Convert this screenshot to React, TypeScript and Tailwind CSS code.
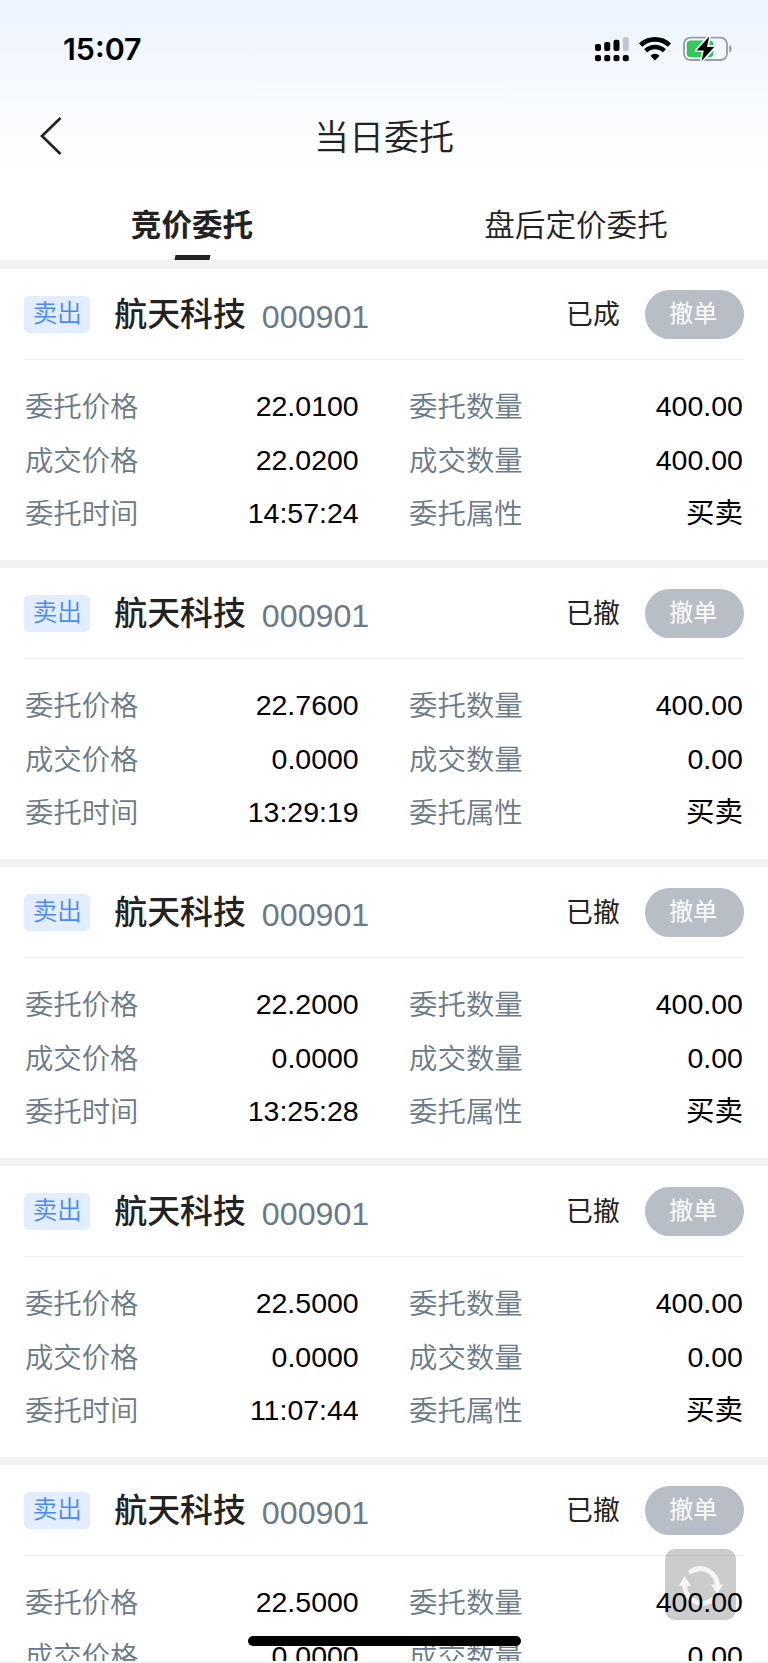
import React from 'react';

interface Order {
    id: number;
    status: string;
    price: string;
    dealPrice: string;
    time?: string;
    amount: string;
    dealAmount: string;
}

const orders: Order[] = [
    { id: 1, status: '已成', price: '22.0100', dealPrice: '22.0200', time: '14:57:24', amount: '400.00', dealAmount: '400.00' },
    { id: 2, status: '已撤', price: '22.7600', dealPrice: '0.0000', time: '13:29:19', amount: '400.00', dealAmount: '0.00' },
    { id: 3, status: '已撤', price: '22.2000', dealPrice: '0.0000', time: '13:25:28', amount: '400.00', dealAmount: '0.00' },
    { id: 4, status: '已撤', price: '22.5000', dealPrice: '0.0000', time: '11:07:44', amount: '400.00', dealAmount: '0.00' },
    { id: 5, status: '已撤', price: '22.5000', dealPrice: '0.0000', amount: '400.00', dealAmount: '0.00' },
];

function SignalIcon() {
    return (
        <svg width="34" height="25" viewBox="0 0 34 25">
            <rect x="0" y="7" width="6" height="7" rx="2" />
            <rect x="9.2" y="5" width="6" height="9" rx="2" />
            <rect x="18.5" y="2.8" width="6" height="11.2" rx="2" />
            <rect x="27.8" y="0" width="6" height="14" rx="2" fill="#c3c6cc" />
            <rect x="0" y="18" width="6" height="6.2" rx="2" />
            <rect x="9.2" y="18" width="6" height="6.2" rx="2" />
            <rect x="18.5" y="18" width="6" height="6.2" rx="2" />
            <rect x="27.8" y="18" width="6" height="6.2" rx="2" />
        </svg>
    );
}

function WifiIcon() {
    return (
        <svg width="32" height="24" viewBox="0 0 32 24" fill="none" stroke="#000" strokeWidth="4.6">
            <path d="M1.6 8.2 A20.8 20.8 0 0 1 30.4 8.2" />
            <path d="M6.7 13.8 A13.2 13.2 0 0 1 25.3 13.8" />
            <path d="M16 23.4 L11.4 18.7 A6.6 6.6 0 0 1 20.6 18.7 Z" fill="#000" stroke="none" />
        </svg>
    );
}

function BatteryIcon() {
    return (
        <svg width="50" height="26" viewBox="0 0 50 26">
            <rect x="1" y="1.6" width="43" height="22.4" rx="6.5" fill="none" stroke="#9a9da3" strokeWidth="1.8" />
            <path d="M46.2 9 C49.6 10.4 49.6 15.2 46.2 16.6 Z" fill="#9a9da3" />
            <rect x="3.8" y="4.4" width="26.6" height="16.8" rx="3.8" fill="#34c759" />
            <path
                d="M26.2 .6 L13.6 14.4 H20.8 L18.6 25 L31.2 11 H24 Z"
                stroke="#f5f8fe"
                strokeWidth="3.4"
                strokeLinejoin="round"
                paintOrder="stroke"
            />
        </svg>
    );
}

function RefreshButton() {
    return (
        <button className="absolute left-[665px] top-[1549px] h-[71px] w-[71px] rounded-[10px] bg-black/20">
            <svg width="71" height="71" viewBox="0 0 71 71" fill="none" stroke="#f5f5f5" strokeWidth="5">
                <path d="M26 22.5 A17 17 0 0 1 52.3 37" strokeLinecap="round" />
                <path d="M46.5 51.4 A17.4 17.4 0 0 1 19.8 35" strokeLinecap="round" />
                <path d="M46 35.5 H58 L52.3 45 Z" fill="#f5f5f5" stroke="none" />
                <path d="M13.8 37 H26 L19.6 27 Z" fill="#f5f5f5" stroke="none" />
            </svg>
        </button>
    );
}

function Field({ label, value }: { label: string; value: string }) {
    return (
        <div className="flex h-[53.3px] items-center justify-between">
            <span className="pl-[0.6px] pt-[2px] text-[28.4px] font-[350] text-[#6b7a88]">{label}</span>
            <span className="z-10 pr-[0.8px] text-black">{value}</span>
        </div>
    );
}

function OrderCard({ order }: { order: Order }) {
    return (
        <section className="h-[299px] shrink-0 border-b-8 border-[#f2f2f5] bg-white px-[24.3px]">
            <div className="flex h-[91px] items-center border-b border-[#ececef] pt-px">
                <span className="flex h-[37px] w-[66px] items-center justify-center rounded-[5px] bg-[#e2edff] text-[24.5px] font-[350] text-[#4a8af4]">
                    卖出
                </span>
                <span className="ml-6 pt-[2px] text-[32.9px] font-medium text-[#222]">航天科技</span>
                <span className="ml-[16px] mt-[6px] text-[32.2px] text-[#6b7a88]">000901</span>
                <span className="ml-auto pt-px text-[26.8px] text-[#222]">{order.status}</span>
                <button className="ml-[25px] h-[49px] w-[99px] rounded-full bg-[#b8bec6] pr-[2px] pb-[2px] text-[24px] text-white">撤单</button>
            </div>
            <div className="grid grid-cols-2 gap-x-[49px] pt-5 text-[28.5px]">
                <Field label="委托价格" value={order.price} />
                <Field label="委托数量" value={order.amount} />
                <Field label="成交价格" value={order.dealPrice} />
                <Field label="成交数量" value={order.dealAmount} />
                {order.time && (
                    <>
                        <Field label="委托时间" value={order.time} />
                        <Field label="委托属性" value="买卖" />
                    </>
                )}
            </div>
        </section>
    );
}

export default function App() {
    return (
        <div className="relative flex h-[1663px] w-[768px] flex-col overflow-hidden bg-white font-['Liberation_Sans','Noto_Sans_CJK_SC',sans-serif] leading-none">
            <header className="h-[260px] shrink-0 bg-linear-to-b from-[#edf4fe] to-white to-[175px]">
                <div className="flex h-[98px] items-center pl-[63px] pr-[35px]">
                    <span className="font-['Inter',sans-serif] text-[30.4px] font-semibold text-black">15:07</span>
                    <div className="ml-auto flex items-center">
                        <SignalIcon />
                        <span className="ml-[10px]"><WifiIcon /></span>
                        <span className="ml-[12px]"><BatteryIcon /></span>
                    </div>
                </div>
                <div className="relative flex h-[76px] items-center justify-center pt-[2px]">
                    <svg className="absolute left-10 top-[19px]" width="22" height="38" viewBox="0 0 22 38" fill="none" stroke="#222" strokeWidth="2.7">
                        <path d="M20.5 1 L2 19 L20.5 37" />
                    </svg>
                    <h1 className="text-[35px] font-[350] text-[#222]">当日委托</h1>
                </div>
                <nav className="grid h-[86px] grid-cols-2 text-[30.6px] text-[#222]">
                    <div className="relative flex items-center justify-center pt-[17px] pb-px font-bold">
                        竞价委托
                        <span className="absolute bottom-0 left-[175px] h-[5px] w-[35px] -skew-x-12 bg-[#222]" />
                    </div>
                    <div className="flex items-center justify-center pt-[17px] pb-px font-[350]">盘后定价委托</div>
                </nav>
            </header>
            <div className="h-[9px] shrink-0 bg-[#f2f2f5]" />
            {orders.map((order) => (
                <OrderCard key={order.id} order={order} />
            ))}
            <RefreshButton />
            <div className="absolute left-[248px] top-[1636px] h-[10px] w-[273px] rounded-full bg-black" />
            <div className="absolute bottom-0 left-0 z-20 h-[2px] w-full bg-[#f5f5f6]" />
        </div>
    );
}
